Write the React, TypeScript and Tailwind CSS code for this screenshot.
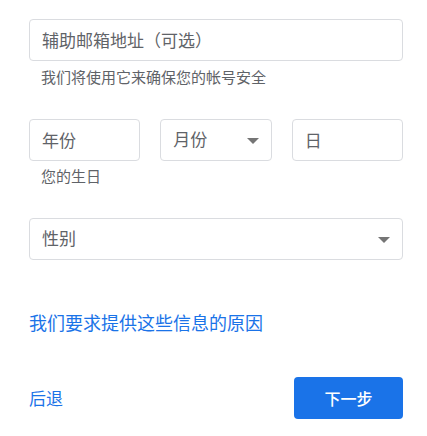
export default function App() {
  return (
    <div
      className="w-[427px] h-[436px] bg-white pl-[29px] pr-[24px] pt-[19px]"
      style={{ fontFamily: '"Noto Sans CJK SC", "Noto Sans", sans-serif' }}
    >
      <div className="flex h-[42px] items-center rounded-[4px] border border-[#dadce0] px-[12px] text-[17px] text-[#5f6368]">
        辅助邮箱地址（可选）
      </div>
      <p className="mt-[5px] pl-[12px] text-[15px] leading-[22px] text-[#5f6368]">
        我们将使用它来确保您的帐号安全
      </p>

      <div className="mt-[31px] grid grid-cols-3 gap-[20px]">
        <div className="flex h-[42px] items-center rounded-[4px] border border-[#dadce0] px-[12px] text-[17px] text-[#5f6368]">
          年份
        </div>
        <div className="flex h-[42px] items-center justify-between rounded-[4px] border border-[#dadce0] pl-[12px] pr-[12px] text-[17px] text-[#5f6368]">
          <span className="-mt-[3px]">月份</span>
          <svg width="12" height="6" viewBox="0 0 12 6" className="mt-[2px]">
            <path d="M0 0h12L6 6z" fill="#757575" />
          </svg>
        </div>
        <div className="flex h-[42px] items-center rounded-[4px] border border-[#dadce0] px-[12px] text-[17px] text-[#5f6368]">
          日
        </div>
      </div>
      <p className="mt-[4px] pl-[12px] text-[15px] leading-[22px] text-[#5f6368]">
        您的生日
      </p>

      <div className="mt-[31px] flex h-[42px] items-center justify-between rounded-[4px] border border-[#dadce0] px-[12px] text-[17px] text-[#5f6368]">
        <span className="-mt-[3px]">性别</span>
        <svg width="12" height="6" viewBox="0 0 12 6" className="mt-[2px]">
          <path d="M0 0h12L6 6z" fill="#757575" />
        </svg>
      </div>

      <a className="mt-[49px] block text-[18px] leading-[26px] text-[#1a73e8]">
        我们要求提供这些信息的原因
      </a>

      <div className="mt-[42px] flex items-center justify-between">
        <span className="text-[17px] text-[#1a73e8]">后退</span>
        <button className="flex h-[42px] w-[109px] items-center justify-center rounded-[4px] bg-[#1a73e8] text-[16px] font-medium text-white">
          下一步
        </button>
      </div>
    </div>
  );
}
